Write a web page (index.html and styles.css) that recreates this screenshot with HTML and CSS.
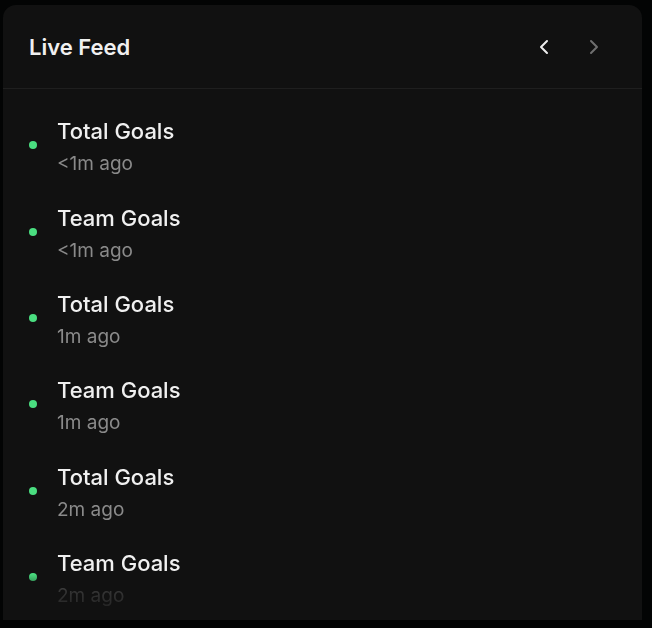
FILE: index.html
```html
<!DOCTYPE html>
<html>
<head>
<meta charset="utf-8">
<link rel="stylesheet" href="styles.css">
</head>
<body>
<div class="card">
  <div class="header">
    <h2 class="title">Live Feed</h2>
    <div class="nav">
      <button class="nav-btn active" aria-label="Previous">
        <svg width="24" height="24" viewBox="0 0 24 24" fill="none" stroke="currentColor" stroke-width="2" stroke-linecap="round" stroke-linejoin="round"><path d="m15 18-6-6 6-6"/></svg>
      </button>
      <button class="nav-btn" aria-label="Next">
        <svg width="24" height="24" viewBox="0 0 24 24" fill="none" stroke="currentColor" stroke-width="2" stroke-linecap="round" stroke-linejoin="round"><path d="m9 18 6-6-6-6"/></svg>
      </button>
    </div>
  </div>
  <ul class="feed">
    <li class="item"><span class="dot"></span><div class="text"><div class="name">Total Goals</div><div class="time">&lt;1m ago</div></div></li>
    <li class="item"><span class="dot"></span><div class="text"><div class="name">Team Goals</div><div class="time">&lt;1m ago</div></div></li>
    <li class="item"><span class="dot"></span><div class="text"><div class="name">Total Goals</div><div class="time">1m ago</div></div></li>
    <li class="item"><span class="dot"></span><div class="text"><div class="name">Team Goals</div><div class="time">1m ago</div></div></li>
    <li class="item"><span class="dot"></span><div class="text"><div class="name">Total Goals</div><div class="time">2m ago</div></div></li>
    <li class="item"><span class="dot"></span><div class="text"><div class="name">Team Goals</div><div class="time">2m ago</div></div></li>
  </ul>
</div>
</body>
</html>
```

FILE: styles.css
```css
html, body {
  margin: 0;
  padding: 0;
  background: #030404;
  height: 100%;
}
body {
  font-family: Inter, "Noto Sans", sans-serif;
  padding: 5px 0 0 3px;
  box-sizing: border-box;
  overflow: hidden;
}
.card {
  width: 639px;
  height: 615px;
  background: #111111;
  border-radius: 13px 13px 0 0;
  overflow: hidden;
  display: flex;
  flex-direction: column;
}
.header {
  height: 83px;
  flex: none;
  border-bottom: 1px solid #1f1f1f;
  display: flex;
  align-items: center;
  justify-content: space-between;
  padding: 0 26px;
}
.title {
  margin: 0;
  font-size: 22px;
  font-weight: 600;
  color: #f0f0f0;
}
.nav {
  display: flex;
  gap: 6px;
}
.nav-btn {
  width: 44px;
  height: 44px;
  border: 0;
  padding: 0;
  background: transparent;
  color: #6f6f6f;
  display: flex;
  align-items: center;
  justify-content: center;
}
.nav-btn.active {
  color: #ededed;
}
.feed {
  list-style: none;
  margin: 0;
  padding: 14.5px 26px 0;
  flex: 1;
  overflow: hidden;
  -webkit-mask-image: linear-gradient(to bottom, #000 calc(100% - 46px), rgba(0,0,0,0.3) calc(100% - 30px), rgba(0,0,0,0.2) calc(100% - 16px), transparent calc(100% - 4px));
  mask-image: linear-gradient(to bottom, #000 calc(100% - 46px), rgba(0,0,0,0.3) calc(100% - 30px), rgba(0,0,0,0.2) calc(100% - 16px), transparent calc(100% - 4px));
}
.item {
  display: flex;
  align-items: center;
  gap: 20px;
  padding: 13.7px 0;
}
.dot {
  width: 8px;
  height: 8px;
  border-radius: 50%;
  background: #4ade80;
  flex: none;
  margin-bottom: 3px;
}
.text {
  display: flex;
  flex-direction: column;
  gap: 7px;
}
.name {
  font-size: 22px;
  line-height: 28px;
  font-weight: 500;
  color: #f0f0f0;
}
.time {
  font-size: 19px;
  line-height: 24px;
  color: #8a8a8a;
}
```
